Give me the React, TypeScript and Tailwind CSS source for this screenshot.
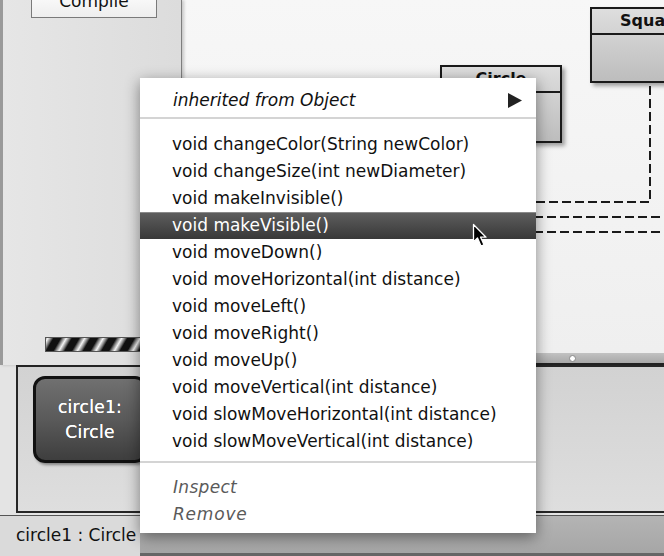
import React from 'react';

const methods = [
  'void changeColor(String newColor)',
  'void changeSize(int newDiameter)',
  'void makeInvisible()',
  'void makeVisible()',
  'void moveDown()',
  'void moveHorizontal(int distance)',
  'void moveLeft()',
  'void moveRight()',
  'void moveUp()',
  'void moveVertical(int distance)',
  'void slowMoveHorizontal(int distance)',
  'void slowMoveVertical(int distance)',
];

const font = "font-['DejaVu_Sans','Liberation_Sans',sans-serif]";

const ClassBox: React.FC<{ name: string; className: string }> = ({ name, className }) => (
  <div className={`absolute flex flex-col border-2 border-[#1a1a1a] bg-gradient-to-b from-[#dedede] to-[#bdbdbd] shadow-[3px_3px_4px_rgba(0,0,0,0.35)] ${className}`}>
    <div className="h-[26px] border-b-2 border-[#1a1a1a] flex items-center justify-center text-[16px] font-bold text-[#111]">{name}</div>
    <div className="flex-1" />
  </div>
);

export default function App() {
  return (
    <div className={`relative w-[664px] h-[556px] overflow-hidden flex flex-col bg-[#e2e2e2] ${font}`}>
      {/* top: toolbar + class diagram */}
      <div className="h-[365px] flex">
        <div className="w-[182px] border-l-[3px] border-[#9a9a9a] border-r border-r-[#7e7e7e] bg-gradient-to-r from-[#e6e6e6] to-[#dcdcdc] relative shadow-[2px_0_3px_rgba(0,0,0,0.2)] z-10">
          <div className="absolute left-[28px] top-[-14px] w-[126px] h-[32px] border border-[#7a7a7a] bg-gradient-to-b from-white to-[#eeeeee] flex items-center justify-center text-[17px] text-[#111]">
            Compile
          </div>
          <div className="absolute left-[42px] top-[337px] w-[120px] h-[15px] border border-[#555] bg-[repeating-linear-gradient(-60deg,#111_0px,#111_6px,#777_8px,#f4f4f4_11px,#777_14px,#111_16px)]" />
        </div>

        <div className="flex-1 flex flex-col bg-[#f3f3f3]">
          <div className="relative flex-1 bg-gradient-to-b from-[#f7f7f7] to-[#efefef]">
            <ClassBox name="Circle" className="left-[258px] top-[65px] w-[122px] h-[78px]" />
            <ClassBox name="Square" className="left-[408px] top-[7px] w-[124px] h-[76px]" />
            <svg className="absolute inset-0" width="482" height="353">
              <g stroke="#1a1a1a" strokeWidth="2" strokeDasharray="9 4" fill="none">
                <path d="M468 86 V202 H300" />
                <path d="M300 217 H482" />
                <path d="M300 232 H482" />
              </g>
            </svg>
          </div>
          <div className="relative h-[12px] bg-gradient-to-b from-[#c2c2c2] to-[#a8a8a8] border-b-2 border-[#222]">
            <div className="absolute left-[387px] top-[2px] w-[7px] h-[7px] rounded-full bg-white border border-[#888]" />
          </div>
        </div>
      </div>

      {/* object bench */}
      <div className="h-[150px] pl-[16px] pb-[2px] bg-[#e4e4e4]">
        <div className="h-full border-y-2 border-l-2 border-[#262626] bg-gradient-to-b from-[#d2d2d2] to-[#dedede] pt-[9px] pl-[15px]">
          <div className="w-[114px] h-[87px] rounded-[12px] border-[3px] border-[#111] bg-gradient-to-b from-[#707070] via-[#5a5a5a] to-[#3e3e3e] shadow-[2px_2px_3px_rgba(0,0,0,0.4)] flex flex-col items-center justify-center text-white text-[17px] leading-[25px] tracking-[0.3px] [text-shadow:0_0_0.6px_#fff]">
            <span>circle1:</span>
            <span>Circle</span>
          </div>
        </div>
      </div>

      {/* status */}
      <div className="flex-1 flex border-t border-[#555]">
        <div className="w-[140px] bg-[#dadada] pl-[16px] pb-[1px] flex items-center text-[17px] text-[#111] whitespace-nowrap">circle1 : Circle</div>
        <div className="flex-1 bg-gradient-to-b from-[#b4b4b4] to-[#a6a6a6] border-b-[3px] border-[#666]" />
      </div>

      {/* popup menu */}
      <div className="absolute left-[140px] top-[78px] w-[396px] h-[455px] bg-white pt-[9px] shadow-[0_4px_14px_rgba(0,0,0,0.45)] text-[17px] text-[#111] z-20">
        <div className="h-[27px] flex items-center justify-between pl-[33px] pr-[14px]">
          <span className="italic">inherited from Object</span>
          <svg width="14" height="15" viewBox="0 0 14 15"><path d="M0 0 L14 7.5 L0 15 Z" fill="#222" /></svg>
        </div>
        <div className="mt-[3px] mb-[12px] h-[2px] bg-[#d4d4d4]" />
        {methods.map((m) => (
          <div
            key={m}
            className={
              m === 'void makeVisible()'
                ? 'h-[27px] flex items-center pl-[32px] text-white bg-gradient-to-b from-[#5e5e5e] to-[#383838] border-t border-[#8a8a8a]'
                : 'h-[27px] flex items-center pl-[32px]'
            }
          >
            {m}
          </div>
        ))}
        <div className="mt-[6px] mb-[11px] h-[2px] bg-[#d4d4d4]" />
        <div className="h-[27px] flex items-center pl-[33px] italic text-[#5a5a5a] tracking-[0.3px]">Inspect</div>
        <div className="h-[27px] flex items-center pl-[33px] italic text-[#5a5a5a] tracking-[0.8px]">Remove</div>
      </div>

      {/* mouse pointer */}
      <svg className="absolute left-[472px] top-[223px] z-30" width="18" height="26" viewBox="0 0 18 26">
        <path d="M1.5 1.5 L1.5 19 L5.5 15 L9 23 L12 21.8 L8.6 14.2 L14 14.2 Z" fill="#000" stroke="#fff" strokeWidth="1.3" strokeLinejoin="round" />
      </svg>
    </div>
  );
}
